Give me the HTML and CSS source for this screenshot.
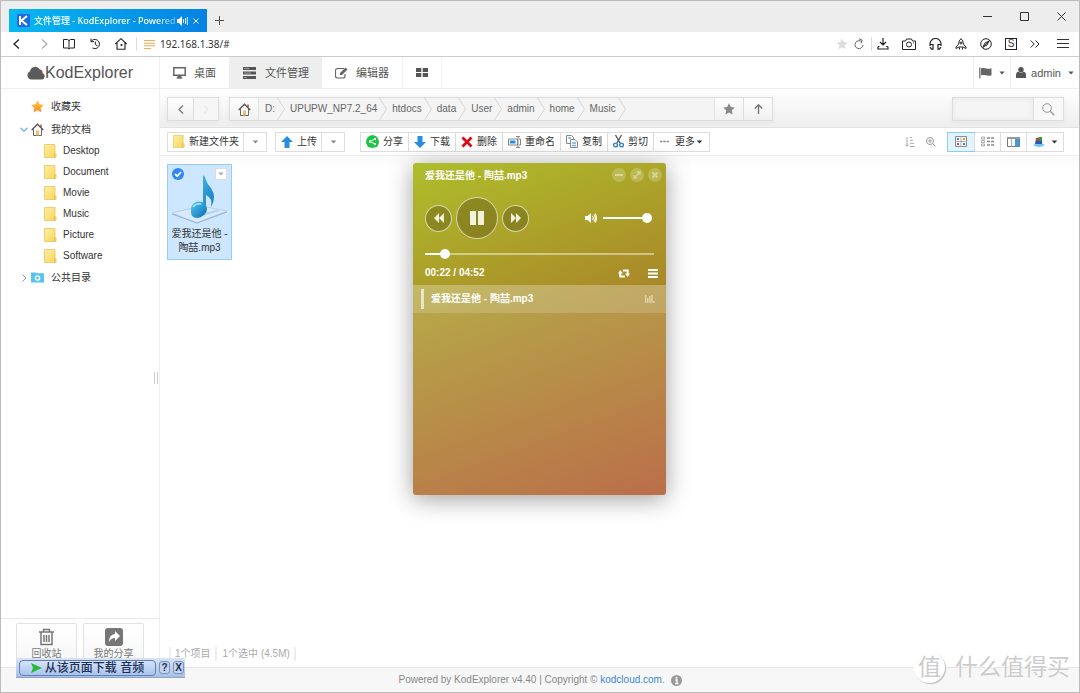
FILE: index.html
```html
<!DOCTYPE html>
<html lang="zh-CN">
<head>
<meta charset="utf-8">
<title>文件管理 - KodExplorer</title>
<link rel="stylesheet" href="styles.css">
</head>
<body>
<svg class="defs" width="0" height="0" aria-hidden="true">
  <defs>
    <linearGradient id="gold" x1="0" y1="0" x2="1" y2="1"><stop offset="0" stop-color="#fff0a6"/><stop offset="1" stop-color="#f7d458"/></linearGradient>
    <linearGradient id="note" x1="0" y1="0" x2="1" y2="1"><stop offset="0" stop-color="#55c8f5"/><stop offset="1" stop-color="#0b6fb5"/></linearGradient>
    <linearGradient id="orange" x1="0" y1="0" x2="0" y2="1"><stop offset="0" stop-color="#ffc94a"/><stop offset="1" stop-color="#ff8a1c"/></linearGradient>
  </defs>
  <symbol id="folder" viewBox="0 0 13 14"><path d="M.5.5h10.500v9h1v4H.5z" fill="url(#gold)" stroke="#ecd070"/><path d="M10.500 9.500v4" stroke="#e3bf50"/></symbol>
  <symbol id="home" viewBox="0 0 13 13"><path d="M2.500 6v6.500h8V6" fill="#fff" stroke="#666"/><path d="M9.300 1.500h1.500V4H9.300z" fill="#d43"/><path d="M.7 7 6.500 1.200 12.300 7" fill="none" stroke="#555" stroke-width="1.300"/><path d="M5 7.500h3v5H5z" fill="#f0bd68"/></symbol>
  <symbol id="caret" viewBox="0 0 8 5"><path d="M.5.5h7L4 4.500z" fill="currentColor"/></symbol>
  <symbol id="chevron" viewBox="0 0 8 22"><path d="M.5 0 7.500 11 .5 22" fill="none" stroke="#d6d6d6"/></symbol>
</svg>

<div class="window">
  <header class="titlebar">
    <div class="tab">
      <svg width="13" height="13" viewBox="0 0 13 13"><rect width="13" height="13" rx="1" fill="#2468e8"/><path d="M3 2v9M10 2 4.500 6.500 10 11" stroke="#fff" stroke-width="2" fill="none"/></svg>
      <span class="tab-title">文件管理 - KodExplorer - Powered</span>
      <svg width="11" height="10" viewBox="0 0 11 10"><path d="M0 3h2l3-3v10L2 7H0z" fill="#fff"/><path d="M6.500 3v4M8.500 2v6M10.300 1v8" stroke="#d3ecff" stroke-width="1"/></svg>
      <button class="plain" aria-label="关闭标签"><svg width="6" height="6" viewBox="0 0 6 6"><path d="m.5.5 5 5m0-5-5 5" stroke="#fff"/></svg></button>
    </div>
    <button class="plain new-tab" aria-label="新标签"><svg width="9" height="9" viewBox="0 0 9 9"><path d="M4.500 0v9M0 4.500h9" stroke="#555"/></svg></button>
    <div class="win-controls">
      <button class="plain" aria-label="最小化"><svg width="9" height="9" viewBox="0 0 9 9"><path d="M0 4.500h9" stroke="#333"/></svg></button>
      <button class="plain" aria-label="最大化"><svg width="9" height="9" viewBox="0 0 9 9"><path d="M.5.500h8v8h-8z" stroke="#333" fill="none"/></svg></button>
      <button class="plain" aria-label="关闭"><svg width="9" height="9" viewBox="0 0 9 9"><path d="m.5.5 8 8m0-8-8 8" stroke="#333"/></svg></button>
    </div>
  </header>

  <div class="addressbar">
    <div class="nav-icons">
      <button class="plain" aria-label="后退"><svg width="12" height="12" viewBox="0 0 12 12"><path d="M8 1.500 3 6l5 4.500" stroke="#222" fill="none" stroke-width="1.300"/></svg></button>
      <button class="plain" aria-label="前进"><svg width="12" height="12" viewBox="0 0 12 12"><path d="m5 1.500 5 4.500-5 4.500" stroke="#aaa" fill="none" stroke-width="1.200"/></svg></button>
      <button class="plain" aria-label="收藏"><svg width="12" height="12" viewBox="0 0 12 12"><path d="M6 2v9M.5 1.500h4L6 2.500l1.500-1h4v8.500h-4L6 11l-1.500-1h-4z" stroke="#222" fill="none"/></svg></button>
      <button class="plain" aria-label="历史"><svg width="12" height="12" viewBox="0 0 12 12"><path d="M2 3.500a4.600 4.600 0 1 1 1.500 6.500M2 .5v3.200h3M6.300 3.500v3l2.200 1.500" stroke="#222" fill="none"/></svg></button>
      <button class="plain" aria-label="主页"><svg width="12" height="12" viewBox="0 0 12 12"><path d="M.3 6 6 .7 11.700 6M2 5v6.300h8V5" stroke="#222" fill="none" stroke-width="1.100"/><circle cx="6.500" cy="7" r="1.100" fill="#222"/></svg></button>
    </div>
    <span class="divider"></span>
    <svg width="11" height="9" viewBox="0 0 11 9"><path d="M0 .5h11M0 3.200h11M0 5.800h11M0 8.500h7" stroke="#f7a94f"/></svg>
    <input class="url" type="text" aria-label="地址" value="192.168.1.38/#">
    <div class="tool-icons">
      <button class="plain" aria-label="星标"><svg width="12" height="12" viewBox="0 0 12 12"><path d="m6 .5 1.700 3.600 3.900.5-2.900 2.700.8 4L6 9.300l-3.500 2 .8-4L.4 4.600l3.900-.5z" fill="#ddd"/></svg></button>
      <button class="plain" aria-label="刷新"><svg width="10" height="12" viewBox="0 0 10 12"><path d="M8 4A4 4 0 1 0 9 7M5 .8l3.200 1.500L7 5.500" stroke="#666" fill="none"/></svg></button>
      <span class="divider"></span>
      <button class="plain" aria-label="下载"><svg width="12" height="12" viewBox="0 0 12 12"><path d="M6 0v6.500M3 4l3 3 3-3M2.500 8.500h-1A1 1 0 0 0 1 9.500V11h10V9.500a1 1 0 0 0-1-1H9" stroke="#222" fill="none" stroke-width="1.200"/></svg></button>
      <button class="plain" aria-label="截图"><svg width="14" height="12" viewBox="0 0 14 12"><path d="M.5 3h3l1-2h5l1 2h3v8.500H.5z" stroke="#222" fill="none"/><circle cx="7" cy="6.500" r="2.500" stroke="#222" fill="none"/><path d="M11 5h1" stroke="#222"/></svg></button>
      <button class="plain" aria-label="音乐"><svg width="13" height="12" viewBox="0 0 13 12"><path d="M1 8V6a5 5 0 0 1 11 0v2M1.500 6.500H4v4.700H2.500L1 9M11.500 6.500H9v4.700h1.500L12 9" stroke="#222" fill="none" stroke-width="1.200"/></svg></button>
      <button class="plain" aria-label="加速"><svg width="12" height="12" viewBox="0 0 12 12"><path d="M6 .7Q3.500 2.500 3.700 6L1 9v1.500L4 9h4l3 1.500V9L8.300 6Q8.500 2.500 6 .7zM4.500 9.500v2M7.500 9.500v2" stroke="#222" fill="none"/><circle cx="6" cy="5" r="1" stroke="#222" fill="none"/></svg></button>
      <button class="plain" aria-label="指南"><svg width="12" height="12" viewBox="0 0 12 12"><circle cx="6" cy="6" r="5.300" stroke="#222" fill="none"/><path d="m9 3-2 4-4 2 2-4zM2.500 10 10 2" stroke="#222" fill="none"/></svg></button>
      <button class="plain boxed" aria-label="脚本">S</button>
      <button class="plain" aria-label="更多"><svg width="10" height="8" viewBox="0 0 10 8"><path d="m.7.5 3.500 3.500L.7 7.500M5.500.5 9 4 5.500 7.500" stroke="#222" fill="none"/></svg></button>
      <button class="plain menu" aria-label="菜单"><svg width="12" height="10" viewBox="0 0 12 10"><path d="M0 .5h12M0 4.500h12M0 8.500h12" stroke="#333"/></svg></button>
    </div>
  </div>

  <header class="app-header">
    <div class="brand"><svg width="18" height="14" viewBox="0 0 18 14"><path d="M4.500 13.500A4.300 4.300 0 0 1 3 5.300 5.300 5.300 0 0 1 12.800 3.400 3 3 0 0 1 15.500 7a3.400 3.400 0 0 1-.5 6.500z" fill="#5b5b5b"/></svg>KodExplorer</div>
    <nav class="app-nav">
      <button><svg width="13" height="12" viewBox="0 0 13 12"><path d="M.8.8h11.400v7.400H.8z" stroke="#666" stroke-width="1.500" fill="none"/><path d="M3.500 11h6M5 9h3v2H5z" stroke="#666" fill="#666"/></svg>桌面</button>
      <button class="active"><svg width="15" height="12" viewBox="0 0 15 12"><path d="M1 0h13v3H1zM1 4.500h13v3H1zM1 9h13v3H1z" fill="#555"/><path d="M2 1.500h5M2 6h7M2 10.500h3" stroke="#999"/></svg>文件管理</button>
      <button><svg width="13" height="12" viewBox="0 0 13 12"><path d="M9 1.500H2.500a2 2 0 0 0-2 2V9a2 2 0 0 0 2 2H8a2 2 0 0 0 2-2V7" stroke="#666" fill="none" stroke-width="1.200"/><path d="m5 6 5.500-5.500 2 2L7 8H5z" fill="#666"/></svg>编辑器</button>
      <button aria-label="应用"><svg width="12" height="9" viewBox="0 0 12 9"><path d="M0 0h5.300v4H0zM6.700 0H12v4H6.700zM0 5h5.300v4H0zM6.700 5H12v4H6.700z" fill="#555"/></svg></button>
    </nav>
    <div class="user-nav">
      <button aria-label="语言"><svg width="13" height="12" viewBox="0 0 13 12"><path d="M.8.5v11" stroke="#666" stroke-width="1.200"/><path d="M2 1.500c3-1.500 5 1.500 10.500-.3v7C8 10 6 7 2 8.500z" fill="#666"/></svg><svg class="caret" width="6" height="4"><use href="#caret"/></svg></button>
      <button><svg width="10" height="11" viewBox="0 0 10 11"><circle cx="5" cy="2.800" r="2.700" fill="#555"/><path d="M0 11V8q0-3 2.500-3.200 2.500 1.700 5 0Q10 5 10 8v3z" fill="#555"/></svg>admin<svg class="caret" width="6" height="4"><use href="#caret"/></svg></button>
    </div>
  </header>

  <div class="workspace">
    <aside class="sidebar">
      <ul class="tree">
        <li class="root"><span class="twist"></span><svg width="13" height="13" viewBox="0 0 13 13"><path d="m6.500.3 1.900 4 4.400.6-3.200 3 .8 4.400-3.900-2.100-3.900 2.100.8-4.400-3.200-3 4.400-.6z" fill="url(#orange)"/></svg>收藏夹</li>
        <li class="root"><svg class="twist" width="8" height="5" viewBox="0 0 8 5"><path d="m.5.7 3.500 3.500L7.500.7" stroke="#6db1ee" fill="none" stroke-width="1.300"/></svg><svg width="13" height="13"><use href="#home"/></svg>我的文档</li>
        <li>
          <ul class="children">
            <li><svg width="13" height="14"><use href="#folder"/></svg>Desktop</li>
            <li><svg width="13" height="14"><use href="#folder"/></svg>Document</li>
            <li><svg width="13" height="14"><use href="#folder"/></svg>Movie</li>
            <li><svg width="13" height="14"><use href="#folder"/></svg>Music</li>
            <li><svg width="13" height="14"><use href="#folder"/></svg>Picture</li>
            <li><svg width="13" height="14"><use href="#folder"/></svg>Software</li>
          </ul>
        </li>
        <li class="root"><svg class="twist" width="8" height="8" viewBox="0 0 8 8"><path d="M2.500.5 6 4 2.500 7.500" stroke="#999" fill="none"/></svg><svg width="13" height="11" viewBox="0 0 14 11"><path d="M0 0h5l1 1h8v10H0z" fill="#57c3ee"/><circle cx="7" cy="6" r="2.300" stroke="#fff" stroke-width="1.500" fill="none"/></svg>公共目录</li>
      </ul>
      <span class="grip"></span>
      <div class="side-foot">
        <button><svg width="17" height="18" viewBox="0 0 17 18"><path d="M1 4h15M5.500 4V1.500h6V4M3 4v12.500h11V4M6 7v7M8.500 7v7M11 7v7" stroke="#777" stroke-width="1.500" fill="none"/></svg>回收站</button>
        <button><svg width="18" height="18" viewBox="0 0 18 18"><rect width="18" height="18" rx="3" fill="#777"/><path d="M10 3v3Q4 6.500 4 14q2-4 6-4v3l5-5z" fill="#fff"/></svg>我的分享</button>
      </div>
    </aside>

    <main class="content">
      <div class="pathbar">
        <div class="group history">
          <button aria-label="后退"><svg width="6" height="9" viewBox="0 0 6 9"><path d="M5 .5 1 4.500l4 4" stroke="#777" fill="none" stroke-width="1.300"/></svg></button>
          <button disabled aria-label="前进"><svg width="6" height="9" viewBox="0 0 6 9"><path d="m1 .5 4 4-4 4" stroke="#ddd" fill="none"/></svg></button>
        </div>
        <div class="group path">
          <button class="home" aria-label="主页"><svg width="13" height="13"><use href="#home"/></svg></button>
          <ol class="crumbs">
            <li>D:<svg width="8" height="22"><use href="#chevron"/></svg></li>
            <li>UPUPW_NP7.2_64<svg width="8" height="22"><use href="#chevron"/></svg></li>
            <li>htdocs<svg width="8" height="22"><use href="#chevron"/></svg></li>
            <li>data<svg width="8" height="22"><use href="#chevron"/></svg></li>
            <li>User<svg width="8" height="22"><use href="#chevron"/></svg></li>
            <li>admin<svg width="8" height="22"><use href="#chevron"/></svg></li>
            <li>home<svg width="8" height="22"><use href="#chevron"/></svg></li>
            <li>Music<svg width="8" height="22"><use href="#chevron"/></svg></li>
          </ol>
          <button aria-label="收藏"><svg width="12" height="12" viewBox="0 0 12 12"><path d="m6 .3 1.800 3.700 4 .5-3 2.800.8 4.200L6 9.500l-3.600 2 .8-4.200-3-2.800 4-.5z" fill="#888"/></svg></button>
          <button aria-label="上级"><svg width="9" height="10" viewBox="0 0 9 10"><path d="M4.500 10V1M.8 4.500l3.700-3.700 3.700 3.700" stroke="#777" fill="none" stroke-width="1.400"/></svg></button>
        </div>
        <div class="group search">
          <input type="search" aria-label="搜索">
          <button aria-label="搜索"><svg width="13" height="13" viewBox="0 0 13 13"><circle cx="5" cy="5" r="4.300" stroke="#999" fill="none"/><path d="m8.300 8.300 4 4" stroke="#999" stroke-width="1.300"/></svg></button>
        </div>
      </div>

      <div class="toolbar">
        <div class="group">
          <button><svg width="12" height="13"><use href="#folder"/></svg>新建文件夹</button>
          <button class="drop" aria-label="新建选项"><svg width="7" height="4"><use href="#caret"/></svg></button>
        </div>
        <div class="group upload">
          <button><svg width="12" height="12" viewBox="0 0 12 12"><path d="m6 0 6 6H8.500v6h-5V6H0z" fill="#2b8de0"/></svg>上传</button>
          <button class="drop" aria-label="上传选项"><svg width="7" height="4"><use href="#caret"/></svg></button>
        </div>
        <div class="group actions">
          <button><svg width="13" height="13" viewBox="0 0 13 13"><path d="M6.500 0 10 1l2.500 3 .5 4-2 4-4.500 1L2 12 0 8l.5-4L3 1z" fill="#21c544"/><path d="M9 4 4 6.500 9 9" stroke="#fff" fill="none"/><path d="M8 3h2v2H8zM3 5.500h2v2H3zM8 8h2v2H8z" fill="#fff"/></svg>分享</button>
          <button><svg width="12" height="12" viewBox="0 0 12 12"><path d="m6 12 6-6H8.500V0h-5v6H0z" fill="#2b8de0"/></svg>下载</button>
          <button><svg width="12" height="12" viewBox="0 0 12 12"><path d="m1.500 1.500 9 9m0-9-9 9" stroke="#d90b16" stroke-width="2.800"/></svg>删除</button>
          <button><svg width="13" height="12" viewBox="0 0 13 12"><path d="M.5 3h9v6h-9zM8 .500h4M8 11.500h4M10 .5v11M11 3h1.500v6H11" stroke="#888" fill="#fff"/><path d="M2 4.500h5.500v3H2z" fill="#2490e6"/></svg>重命名</button>
          <button><svg width="12" height="13" viewBox="0 0 12 13"><path d="M.5.5h5l2 2v6h-7z" stroke="#888" fill="#fff"/><path d="M4.500 4.500h4.500l2.500 2.500v5.500h-7z" stroke="#888" fill="#fff"/><path d="M2 3h3M6 8h4M6 10.500h4" stroke="#73b3ed" stroke-width="1.500"/></svg>复制</button>
          <button><svg width="11" height="13" viewBox="0 0 11 13"><path d="M2.500 0 7 8M8.500 0 4 8" stroke="#555" stroke-width="1.300"/><circle cx="2.500" cy="10" r="1.900" stroke="#2785cf" stroke-width="1.400" fill="none"/><circle cx="8.500" cy="10" r="1.900" stroke="#2785cf" stroke-width="1.400" fill="none"/></svg>剪切</button>
          <button><svg width="9" height="3" viewBox="0 0 9 3"><path d="M0 1.500h9" stroke="#888" stroke-width="1.500" stroke-dasharray="2.300 1"/></svg><span class="more">更多<svg width="7" height="4"><use href="#caret"/></svg></span></button>
        </div>
        <div class="view-tools">
          <button class="plain" aria-label="排序"><svg width="10" height="10" viewBox="0 0 10 10"><path d="M2 0v9M.3 7.500 2 9.300l1.700-1.800M5 .5h2M5 3.300h3M5 6.300h4M5 9.500h5" stroke="#aaa" fill="none"/></svg></button>
          <button class="plain" aria-label="缩放"><svg width="10" height="10" viewBox="0 0 10 10"><circle cx="4" cy="4" r="3.500" stroke="#999" fill="none"/><path d="m6.500 6.500 3 3M2.200 4h3.600M4 2.200v3.600" stroke="#999"/></svg></button>
          <div class="group views">
            <button class="on" aria-label="图标"><svg width="12" height="11" viewBox="0 0 12 11"><path d="M.5.5h11v10H.5z" fill="#fff" stroke="#888"/><path d="M6 0v11M0 5.500h12" stroke="#aaa"/><path d="M2 2h2v2H2zM8 7h2v2H8z" fill="#387ecb"/><path d="M8 2h2v2H8z" fill="#d99a31"/><path d="M2 7h2v2H2z" fill="#c43"/></svg></button>
            <button aria-label="列表"><svg width="13" height="11" viewBox="0 0 13 11"><path d="M.5 1h3v2h-3zM.5 4.500h3v2h-3zM.5 8h3v2h-3z" stroke="#aaa" fill="none"/><path d="M6 2h7M6 5.500h7M6 9h7" stroke="#888" stroke-width="1.300" stroke-dasharray="3 1"/></svg></button>
            <button aria-label="分栏"><svg width="13" height="10" viewBox="0 0 13 10"><path d="M.5.5h12v9H.5z" stroke="#777" fill="#fff"/><path d="M0 0h13v2H0z" fill="#999"/><path d="M8 2h4.500v7.500H8z" fill="#3f9ade"/><path d="M4.500 2v8" stroke="#aaa"/></svg></button>
            <button aria-label="主题"><svg width="12" height="10" viewBox="0 0 12 10"><path d="M0 8q6-4 12 0-6 4-12 0" fill="#76c5ec"/><path d="m3 1 6-1v7H2z" fill="#245bbe"/><path d="M3 1h3v3H3z" fill="#cc3c3c"/><path d="M6 0h3v4H6z" fill="#25a23b"/></svg><svg width="7" height="4"><use href="#caret"/></svg></button>
          </div>
        </div>
      </div>

      <section class="files">
        <div class="file">
          <span class="check"><svg width="12" height="12" viewBox="0 0 12 12"><circle cx="6" cy="6" r="6" fill="#2f86f6"/><path d="m3 6 2.300 2.200L9 4" stroke="#fff" stroke-width="1.800" fill="none"/></svg></span>
          <button class="file-menu" aria-label="文件菜单"><svg width="6" height="4"><use href="#caret"/></svg></button>
          <svg width="55" height="50" viewBox="0 0 55 50"><path d="M0 39 29 32 55 37 25 49z" fill="#dbeafa" stroke="#b5cfea"/><path d="m0 40 25 9 30-11" fill="none" stroke="#8fb3d8"/><path d="m26 41 18-5 4 1-18 5z" fill="#b4d2f0"/><path d="M31 35V1q2 1 3 5 1 4 5 8 6 9 0 19 2-9-5-12v14q-1 8-8 9-7 0-7-6 1-7 12-3z" fill="url(#note)"/><ellipse cx="27" cy="35" rx="8" ry="7.500" fill="url(#note)"/><path d="M21 33q3-4 8-3" stroke="#a8e6ff" stroke-width="1.500" fill="none"/></svg>
          <span>爱我还是他&nbsp;- 陶喆.mp3</span>
        </div>
      </section>
      <div class="status"><span>1个项目</span><span>1个选中 (4.5M)</span></div>
    </main>
  </div>

  <footer class="footer">Powered by KodExplorer v4.40 | Copyright © <a href="#">kodcloud.com</a>. <svg width="11" height="11" viewBox="0 0 11 11"><circle cx="5.500" cy="5.500" r="5.500" fill="#999"/><path d="M4.300 5h1.700v3.500M4 8.500h3.500" stroke="#fff" stroke-width="1.300" fill="none"/><circle cx="5.500" cy="2.700" r="1" fill="#fff"/></svg></footer>

  <section class="player">
    <div class="player-top">
      <div class="player-title">
        <strong>爱我还是他 - 陶喆.mp3</strong>
        <button class="dot" aria-label="最小化"><svg width="8" height="8" viewBox="0 0 8 8"><path d="M0 4h8" stroke="currentColor" stroke-width="2"/></svg></button>
        <button class="dot" aria-label="最大化"><svg width="8" height="8" viewBox="0 0 8 8"><path d="M1 7 7 1M4 1h3v3M1 4v3h3" stroke="currentColor" stroke-width="1.300" fill="none"/></svg></button>
        <button class="dot" aria-label="关闭"><svg width="8" height="8" viewBox="0 0 8 8"><path d="m1.500 1.500 5 5m0-5-5 5" stroke="currentColor" stroke-width="2"/></svg></button>
      </div>
      <div class="controls">
        <button class="round" aria-label="上一首"><svg width="10" height="10" viewBox="0 0 10 10"><path d="M5 0v10L0 5zM10 0v10L5 5z" fill="#f3f2dc"/></svg></button>
        <button class="round play" aria-label="暂停"><svg width="14" height="14" viewBox="0 0 14 14"><path d="M0 0h6v14H0zM8 0h6v14H8z" fill="#f3f2dc"/></svg></button>
        <button class="round" aria-label="下一首"><svg width="10" height="10" viewBox="0 0 10 10"><path d="M0 0v10l5-5zM5 0v10l5-5z" fill="#f3f2dc"/></svg></button>
        <svg class="speaker" width="12" height="10" viewBox="0 0 12 10"><path d="M0 3h2.500L6 0v10L2.500 7H0z" fill="#fff"/><path d="M7.500 3q1.500 2 0 4M8.800 1.500q3 3.500 0 7M10 .5q3 4.500 0 9" stroke="#fff" fill="none" stroke-width="1.100"/></svg>
        <input class="volume" type="range" min="0" max="100" value="100" aria-label="音量">
      </div>
      <input class="progress" type="range" min="0" max="292" value="20" aria-label="播放进度">
      <div class="time">
        <strong>00:22 / 04:52</strong>
        <button class="plain" aria-label="循环"><svg width="12" height="9" viewBox="0 0 12 9"><path d="M2.300 3.500v4H7M9.700 5.500v-4H5" stroke="#fff" stroke-width="2" fill="none"/><path d="M0 4.500 2.300 1 5 4.500zM7 4.500 9.700 8 12 4.500z" fill="#fff"/></svg></button>
        <button class="plain" aria-label="播放列表"><svg width="10" height="9" viewBox="0 0 10 9"><path d="M0 1h10M0 4.500h10M0 8h10" stroke="#fff" stroke-width="2"/></svg></button>
      </div>
    </div>
    <ol class="playlist">
      <li><strong>爱我还是他 - 陶喆.mp3</strong><svg width="10" height="8" viewBox="0 0 10 8"><path d="M.7 0v8M2.800 3v5M4.900 1v7M7 0v8M9 6v2" stroke="#e5dcb4" stroke-width="1.200"/></svg></li>
    </ol>
  </section>

  <div class="grabber">
    <button class="grab"><svg width="11" height="10" viewBox="0 0 11 10"><path d="m0 0 11 5-11 5 2-5z" fill="#27ba38"/></svg>从该页面下载 音频</button>
    <button class="small">?</button>
    <button class="small">X</button>
  </div>

  <div class="watermark"><span class="seal">值</span>什么值得买</div>
</div>
</body>
</html>
```

FILE: styles.css
```css
* { box-sizing: border-box; }

body {
  margin: 0;
  font: 10px/14px "Liberation Sans", "Noto Sans CJK SC", sans-serif;
  color: #333;
}

button, input { font: inherit; color: inherit; }
button { margin: 0; padding: 0; border: 0; background: none; display: flex; align-items: center; justify-content: center; }
ul, ol { margin: 0; padding: 0; list-style: none; }
svg { flex: none; display: block; }
.defs { position: absolute; }

.window {
  position: relative;
  display: flex;
  flex-direction: column;
  min-height: 100vh;
  border: 1px solid #bcbcbc;
  background: #fff;
  overflow: hidden;
}

/* Browser chrome */
.titlebar { display: flex; align-items: flex-end; height: 31px; padding-left: 8px; background: #ededed; }
.tab {
  display: flex;
  align-items: center;
  width: 198px;
  height: 23px;
  padding: 0 8px;
  background: linear-gradient(90deg, #06b8f0, #0582e4);
  color: #fff;
  font: 500 9px/14px "Noto Sans", "Noto Sans CJK SC", sans-serif;
}
.tab-title {
  flex: 1;
  margin: 0 0 0 4px;
  white-space: nowrap;
  mask-image: linear-gradient(90deg, #000 85%, rgba(0, 0, 0, .3));
}
.tab button { margin-left: 5px; }
.new-tab { margin-left: 8px; height: 23px; }
.win-controls { display: flex; gap: 28px; margin: 0 13px 0 auto; height: 31px; }

.addressbar { display: flex; align-items: center; height: 25px; padding: 0 10px; border-bottom: 1px solid #ccc; }
.nav-icons { display: flex; gap: 14px; }
.divider { width: 1px; height: 14px; background: #ddd; }
.nav-icons + .divider { margin: 0 7px 0 9px; }
.url {
  flex: 1;
  min-width: 0;
  margin-left: 5px;
  padding: 0;
  border: 0;
  outline: 0;
  font: 10px/14px "Noto Sans", sans-serif;
}
.tool-icons { display: flex; align-items: center; gap: 13px; }
.tool-icons button:nth-child(2) { margin-left: -7px; }
.tool-icons .divider { margin: 0 -8px 0 -6px; }
.tool-icons .menu { margin-left: 4px; }
.boxed { width: 12px; height: 12px; border: 1px solid #222; font-size: 10px; line-height: 10px; }

/* Application header */
.app-header { display: flex; height: 32px; border-bottom: 1px solid #eee; color: #555; font-size: 11px; }
.brand {
  display: flex;
  align-items: center;
  justify-content: center;
  width: 159px;
  border-right: 1px solid #eee;
  font-size: 16px;
}
.app-nav, .user-nav { display: flex; }
.app-nav button { gap: 8px; padding: 0 13px; }
.app-nav button:nth-child(n + 3) { border-right: 1px solid #f2f2f2; }
.app-nav .active { background: #eee; }
.user-nav { margin-left: auto; }
.user-nav button { gap: 5px; padding: 0 5px; border-left: 1px solid #eee; }
.user-nav .caret { margin-left: 2px; }

/* Workspace */
.workspace { display: flex; flex: 1; }
.sidebar { position: relative; display: flex; flex-direction: column; width: 159px; border-right: 1px solid #eee; }
.tree { padding-top: 6px; }
.root { display: flex; align-items: center; gap: 7px; height: 23px; padding-left: 19px; }
.twist { width: 8px; margin-right: -4px; }
.children { display: grid; gap: 1px; }
.children li { display: flex; align-items: center; gap: 6px; height: 20px; padding-left: 43px; }
.grip { position: absolute; right: 1px; top: 283px; width: 4px; height: 12px; border: solid #ccc; border-width: 0 1px; }
.side-foot { display: flex; gap: 6px; margin-top: auto; padding: 4px 15px 1px; border-top: 1px solid #eaeaea; }
.side-foot button {
  flex-direction: column;
  gap: 1px;
  width: 61px;
  padding: 4px 0;
  border: 1px solid #e2e2e2;
  border-radius: 2px;
  background: linear-gradient(#fff, #f6f6f6);
  color: #777;
}

.content { display: flex; flex: 1; flex-direction: column; min-width: 0; }
.group { display: flex; border: 1px solid #ddd; }
.group button + button { border-left: 1px solid #ddd; }

.pathbar {
  display: flex;
  align-items: flex-start;
  height: 39px;
  padding: 8px 15px 0 7px;
  border-bottom: 1px solid #e2e2e2;
  background: linear-gradient(#fff, #eee);
}
.pathbar .group { height: 24px; box-shadow: 0 1px 5px rgba(0, 0, 0, .05); }
.history { margin-right: 10px; }
.history button { width: 25px; background: linear-gradient(#fff, #f0f0f0); }
.history button:disabled { background: #f6f6f6; }
.path { flex: 0 1 544px; min-width: 0; background: #f4f4f4; }
.path button { width: 29px; background: linear-gradient(#fdfdfd, #f1f1f1); border-left: 1px solid #e2e2e2; }
.path .home { border-left: 0; border-right: 1px solid #e2e2e2; }
.crumbs { display: flex; flex: 1; padding-left: 1px; overflow: hidden; color: #666; line-height: 22px; }
.crumbs li { display: flex; align-items: center; gap: 2px; padding-left: 5px; }
.search { margin-left: auto; }
.search input { width: 80px; min-width: 0; padding: 0 6px; border: 0; outline: 0; background: #f5f5f5; box-shadow: inset 0 0 6px #e8e8e8; }
.search button { width: 30px; border-left: 1px solid #ddd; background: #f8f8f8; }

.toolbar {
  display: flex;
  align-items: center;
  height: 28px;
  padding: 0 15px 0 7px;
  border-bottom: 1px solid #eee;
}
.toolbar .group { height: 20px; background: #fff; }
.toolbar .group button { gap: 4px; padding: 0 4px 0 5px; white-space: nowrap; }
.toolbar .actions button { padding: 0 5px; }
.toolbar .actions button:last-child { gap: 6px; padding: 0 6px; }
.toolbar .group .drop { width: 23px; padding: 0; color: #888; }
.upload { margin: 0 15px 0 8px; }
.more { display: flex; align-items: center; gap: 1px; }
.view-tools { display: flex; align-items: center; gap: 11px; margin-left: auto; }
.toolbar .views button { width: 26px; padding: 0; }
.toolbar .views button:last-child { width: 37px; gap: 6px; }
.toolbar .views .on { outline: 1px solid #8ccdf3; background: #e2f4fd; }

.files { flex: 1; padding: 8px 7px; background: linear-gradient(#f9f9f9, #fff 12px); }
.file {
  position: relative;
  display: flex;
  flex-direction: column;
  align-items: center;
  width: 65px;
  padding: 9px 3px 4px;
  border: 1px solid #99cdf5;
  background: #cce7ff;
  text-align: center;
}
.file > span:last-child { margin-top: 3px; }
.check { position: absolute; left: 4px; top: 3px; }
.file-menu { position: absolute; right: 4px; top: 3px; width: 12px; height: 12px; border: 1px solid #ddd; background: #fff; color: #aaa; }
.status { display: flex; padding: 0 9px 6px; color: #aaa; }
.status span { padding-right: 4px; border-right: 2px solid #eee; }
.status span:first-child { padding-left: 4px; border-left: 2px solid #eee; }
.status span + span { padding-left: 6px; }

.footer {
  display: flex;
  align-items: center;
  justify-content: center;
  height: 25px;
  border-top: 1px solid #e5e5e5;
  background: #f7f7f7;
  color: #888;
  white-space: pre;
}
.footer a { color: #3a87cf; text-decoration: none; }
.footer svg { margin-left: 3px; }

/* Music player window */
.player {
  position: absolute;
  left: 412px;
  top: 162px;
  display: flex;
  flex-direction: column;
  width: 253px;
  height: 332px;
  border-radius: 3px;
  overflow: hidden;
  background: linear-gradient(160deg, #aebe2b, #aa8a28 48%, #af552b);
  box-shadow: 0 4px 24px rgba(0, 0, 0, .38);
  color: #fff;
}
.player-top { padding: 4px 4px 5px 12px; }
.player-title { display: flex; align-items: center; gap: 4px; height: 16px; }
.player-title strong { flex: 1; padding-top: 2px; }
.dot { width: 14px; height: 14px; border-radius: 50%; background: rgba(255, 255, 255, .2); color: rgba(255, 255, 255, .4); }
.controls { display: flex; align-items: center; gap: 4px; margin-top: 14px; }
.round { width: 27px; height: 27px; border: 1px solid rgba(255, 255, 255, .65); border-radius: 50%; background: rgba(90, 80, 20, .4); }
.round.play { width: 42px; height: 42px; }
.speaker { margin: 0 2px 0 auto; }

.player input { appearance: none; height: 10px; margin: 0; background: none; }
.player input::-webkit-slider-runnable-track { height: 2px; background: rgba(255, 255, 255, .55); }
.player input::-webkit-slider-thumb { appearance: none; width: 10px; height: 10px; margin-top: -4px; border-radius: 50%; background: #fff; }
.player .volume { width: 49px; margin-right: 10px; }
.player .volume::-webkit-slider-runnable-track { background: #fff; }
.player .progress { display: block; width: 229px; margin-top: 10px; }
.player .progress::-webkit-slider-runnable-track { background: linear-gradient(90deg, #fff 9%, rgba(255, 255, 255, .45) 9%); }
.time { display: flex; align-items: center; gap: 18px; margin-top: 7px; padding-right: 4px; }
.time strong { flex: 1; }
.playlist { flex: 1; background: rgba(255, 255, 255, .15); }
.playlist li { display: flex; align-items: center; height: 28px; padding: 4px 11px 4px 8px; background: rgba(255, 255, 255, .16); }
.playlist li::before { content: ""; width: 3px; height: 20px; background: rgba(255, 255, 255, .65); }
.playlist strong { flex: 1; margin-left: 7px; }

/* Download helper floating over the page */
.grabber {
  position: absolute;
  left: 15px;
  bottom: 14px;
  display: flex;
  align-items: center;
  gap: 3px;
  height: 20px;
  padding: 0 1px 0 3px;
  border: solid #8ba5cd;
  border-width: 0 0 1px;
  background: linear-gradient(#d8e4f5, #a9bfe2);
}
.grab {
  gap: 3px;
  width: 137px;
  height: 16px;
  border: 1px solid #6280b5;
  border-radius: 4px;
  background: linear-gradient(#d5e4fa, #a9c3ec);
  color: #1d2f55;
  font-size: 12px;
  font-weight: 500;
  white-space: nowrap;
}
.small { width: 11px; height: 13px; border: 1px solid #7893c0; border-radius: 3px; background: #c3d4ef; color: #1d2f55; font-weight: bold; }

.watermark {
  position: absolute;
  right: 9px;
  bottom: 9px;
  display: flex;
  align-items: center;
  gap: 10px;
  color: #ccc;
  font-size: 23px;
  line-height: 32px;
  text-shadow: -1px -1px #fff;
}
.seal { width: 31px; height: 31px; border-radius: 50%; background: #fff; box-shadow: 1px 1px 1px #bbb; text-align: center; line-height: 30px; }
```
